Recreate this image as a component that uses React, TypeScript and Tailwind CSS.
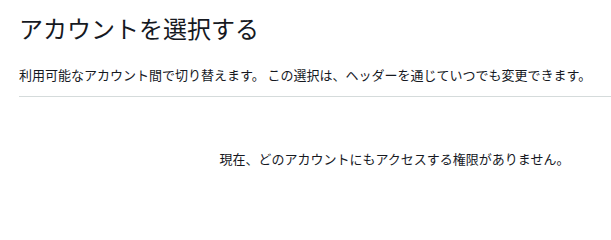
export default function App() {
  return (
    <div
      className="w-[611px] h-[213px] overflow-hidden bg-white text-[#16191f]"
      style={{ fontFamily: '"Noto Sans CJK JP", "Noto Sans", sans-serif' }}
    >
      <div className="pl-[19px] pt-[13px]">
        <h1 className="text-[24px] leading-[30px] font-normal">アカウントを選択する</h1>
        <p className="mt-[22px] text-[13px] leading-[20px] text-[#16191f]">
          利用可能なアカウント間で切り替えます。 この選択は、ヘッダーを通じていつでも変更できます。
        </p>
        <div className="mt-[11px] border-t border-[#d5dbdb]" />
        <div className="w-[751px] pt-[52px] text-center text-[13px] leading-[20px]">
          現在、どのアカウントにもアクセスする権限がありません。
        </div>
      </div>
    </div>
  );
}
